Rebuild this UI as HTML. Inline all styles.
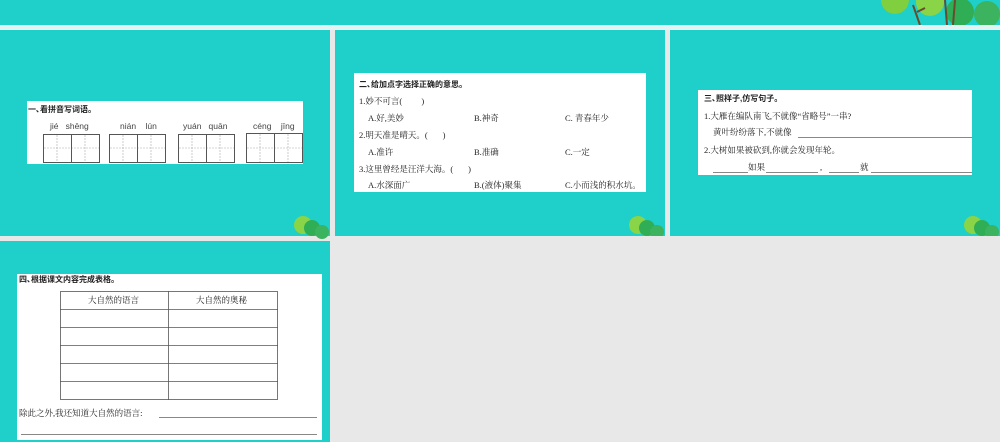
<!DOCTYPE html>
<html><head><meta charset="utf-8"><style>
*{margin:0;padding:0;box-sizing:border-box}
body{width:1000px;height:442px;background:#e8e8e8;position:relative;overflow:hidden;font-family:"Liberation Serif","Noto Serif CJK SC",serif;color:#222}
.s{position:absolute;background:#1ecfca}
.w{position:absolute;background:#fff}
.t{position:absolute;font-size:8.5px;white-space:nowrap;line-height:1}
.b{font-family:"Liberation Sans","Noto Sans CJK SC",sans-serif;font-weight:bold;font-size:8px}
.ln{position:absolute;border-bottom:1px solid #888;height:0}
.tree{position:absolute}
</style></head><body>
<div style="position:absolute;left:0;top:25px;width:1000px;height:5px;background:#e3f3f3"></div>
<div class="s" style="left:0;top:0;width:1000px;height:25px"></div>
<svg class="tree" style="left:875px;top:0" width="125" height="25">
<circle cx="20" cy="0" r="14" fill="#7fcf3e"/><circle cx="55" cy="2" r="14" fill="#8ad447"/>
<circle cx="85" cy="12" r="14" fill="#2fae55"/><circle cx="112" cy="14" r="13" fill="#3cb35e"/>
<path d="M38 5 L45 25 M42 12 L50 8 M70 0 L72 25 M80 0 L78 25" stroke="#6b4a2e" stroke-width="2"/>
</svg>
<!-- slide1 -->
<div class="s" style="left:0;top:30px;width:330px;height:206px"></div>
<div class="w" style="left:27px;top:101px;width:276px;height:63px"></div>
<div class="t b" style="left:28px;top:106px">一､看拼音写词语。</div>
<div class="t" style="left:50px;top:122px;font-family:'Liberation Sans';color:#444">jié&nbsp;&nbsp;&nbsp;shēng</div>
<div class="t" style="left:120px;top:122px;font-family:'Liberation Sans';color:#444">nián&nbsp;&nbsp;&nbsp;&nbsp;lún</div>
<div class="t" style="left:183px;top:122px;font-family:'Liberation Sans';color:#444">yuán&nbsp;&nbsp;&nbsp;quān</div>
<div class="t" style="left:253px;top:122px;font-family:'Liberation Sans';color:#444">céng&nbsp;&nbsp;&nbsp;&nbsp;jīng</div>
<svg style="position:absolute;left:0;top:0" width="330" height="240">
<g stroke="#aaa" stroke-width="0.6" stroke-dasharray="2,1">
<line x1="44" y1="148" x2="99" y2="148"/><line x1="57" y1="135" x2="57" y2="162"/><line x1="85" y1="135" x2="85" y2="162"/>
<line x1="110" y1="148" x2="165" y2="148"/><line x1="123" y1="135" x2="123" y2="162"/><line x1="151" y1="135" x2="151" y2="162"/>
<line x1="179" y1="148" x2="234" y2="148"/><line x1="192" y1="135" x2="192" y2="162"/><line x1="220" y1="135" x2="220" y2="162"/>
<line x1="247" y1="148" x2="302" y2="148"/><line x1="260" y1="134" x2="260" y2="162"/><line x1="288" y1="134" x2="288" y2="162"/>
</g>
<g fill="none" stroke="#555" stroke-width="1">
<rect x="43.5" y="134.5" width="56" height="28"/><line x1="71.5" y1="134" x2="71.5" y2="163"/>
<rect x="109.5" y="134.5" width="56" height="28"/><line x1="137.5" y1="134" x2="137.5" y2="163"/>
<rect x="178.5" y="134.5" width="56" height="28"/><line x1="206.5" y1="134" x2="206.5" y2="163"/>
<rect x="246.5" y="133.5" width="56" height="29"/><line x1="274.5" y1="133" x2="274.5" y2="163"/>
</g>
<circle cx="303" cy="225" r="9" fill="#8ad447"/><circle cx="312" cy="228" r="8" fill="#2fae55"/><circle cx="322" cy="232" r="7" fill="#3cb35e"/>
</svg>
<!-- slide2 -->
<div class="s" style="left:335px;top:30px;width:330px;height:206px"></div>
<div class="w" style="left:354px;top:73px;width:292px;height:119px"></div>
<div class="t b" style="left:359px;top:81px">二､给加点字选择正确的意思。</div>
<div class="t" style="left:359px;top:97px">1.妙不可言(&nbsp;&nbsp;&nbsp;&nbsp;&nbsp;&nbsp;&nbsp;&nbsp;&nbsp;)</div>
<div class="t" style="left:368px;top:114px">A.好,美妙</div><div class="t" style="left:474px;top:114px">B.神奇</div><div class="t" style="left:565px;top:114px">C. 青春年少</div>
<div class="t" style="left:359px;top:131px">2.明天准是晴天。(&nbsp;&nbsp;&nbsp;&nbsp;&nbsp;&nbsp;&nbsp;)</div>
<div class="t" style="left:368px;top:148px">A.准许</div><div class="t" style="left:474px;top:148px">B.准确</div><div class="t" style="left:565px;top:148px">C.一定</div>
<div class="t" style="left:359px;top:165px">3.这里曾经是汪洋大海。(&nbsp;&nbsp;&nbsp;&nbsp;&nbsp;&nbsp;&nbsp;)</div>
<div class="t" style="left:368px;top:181px">A.水深面广</div><div class="t" style="left:474px;top:181px">B.(液体)聚集</div><div class="t" style="left:565px;top:181px">C.小而浅的积水坑。</div>
<svg style="position:absolute;left:620px;top:210px" width="45" height="26"><circle cx="18" cy="15" r="9" fill="#8ad447"/><circle cx="27" cy="18" r="8" fill="#2fae55"/><circle cx="37" cy="22" r="7" fill="#3cb35e"/></svg>
<!-- slide3 -->
<div class="s" style="left:670px;top:30px;width:330px;height:206px"></div>
<div class="w" style="left:698px;top:90px;width:274px;height:85px"></div>
<div class="t b" style="left:704px;top:95px">三､照样子,仿写句子。</div>
<div class="t" style="left:704px;top:112px">1.大雁在编队南飞,不就像“省略号”一串?</div>
<div class="t" style="left:713px;top:128px">黄叶纷纷落下,不就像</div><div class="ln" style="left:798px;top:137px;width:174px"></div>
<div class="t" style="left:704px;top:146px">2.大树如果被砍到,你就会发现年轮。</div>
<div class="ln" style="left:713px;top:172px;width:35px"></div><div class="t" style="left:748px;top:163px">如果</div><div class="ln" style="left:766px;top:172px;width:52px"></div>
<div class="t" style="left:820px;top:163px">,</div><div class="ln" style="left:829px;top:172px;width:30px"></div><div class="t" style="left:860px;top:163px">就</div><div class="ln" style="left:871px;top:172px;width:101px"></div>
<svg style="position:absolute;left:955px;top:210px" width="45" height="26"><circle cx="18" cy="15" r="9" fill="#8ad447"/><circle cx="27" cy="18" r="8" fill="#2fae55"/><circle cx="37" cy="22" r="7" fill="#3cb35e"/></svg>
<!-- slide4 -->
<div class="s" style="left:0;top:241px;width:330px;height:201px"></div>
<div class="w" style="left:17px;top:274px;width:305px;height:166px"></div>
<div class="t b" style="left:19px;top:276px">四､根据课文内容完成表格。</div>
<svg style="position:absolute;left:0;top:0" width="330" height="442">
<g fill="none" stroke="#555" stroke-width="0.8">
<rect x="60.5" y="291.5" width="217" height="108"/>
<line x1="168.5" y1="291" x2="168.5" y2="400"/>
<line x1="60" y1="309.5" x2="278" y2="309.5"/><line x1="60" y1="327.5" x2="278" y2="327.5"/>
<line x1="60" y1="345.5" x2="278" y2="345.5"/><line x1="60" y1="363.5" x2="278" y2="363.5"/>
<line x1="60" y1="381.5" x2="278" y2="381.5"/>
</g></svg>
<div class="t" style="left:88px;top:296px">大自然的语言</div><div class="t" style="left:196px;top:296px">大自然的奥秘</div>
<div class="t" style="left:19px;top:409px">除此之外,我还知道大自然的语言:</div>
<div class="ln" style="left:159px;top:417px;width:158px"></div>
<div class="ln" style="left:21px;top:434px;width:296px"></div>
</body></html>
